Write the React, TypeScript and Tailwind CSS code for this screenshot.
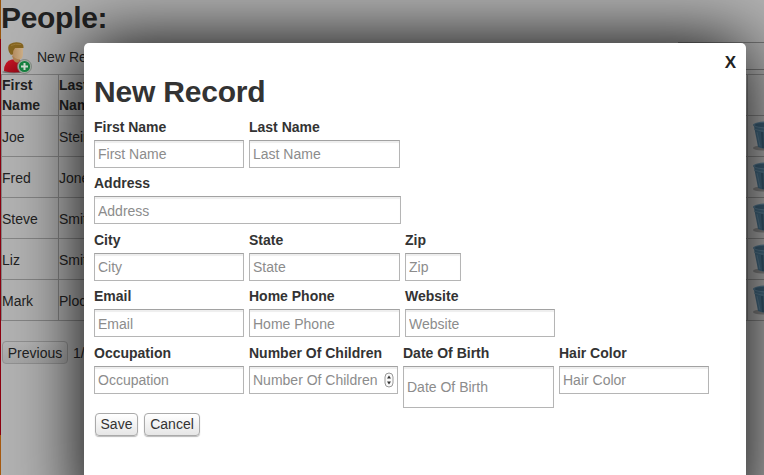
import React from "react";

type FieldProps = { label: string; box: string; low?: boolean; spinner?: boolean };

function Field({ label, box, low, spinner }: FieldProps) {
  return (
    <label className="flex shrink-0 flex-col">
      <span className="h-5 whitespace-nowrap font-bold leading-5">{label}</span>
      <span className={`mt-[3px] flex items-center border border-[#b5b5b5] border-t-[#a2a2a2] bg-white shadow-[inset_0_2px_1px_#eee] ${box}`}>
        <input
          placeholder={label}
          className={`h-full w-full min-w-0 bg-transparent pl-[3px] outline-none placeholder:text-[#8c8c8c] ${low ? "pt-px" : ""}`}
        />
        {spinner && (
          <svg className="mr-[3px] shrink-0" width="10" height="16" viewBox="0 0 10 16">
            <rect x="1" y="1" width="8" height="14" rx="4" fill="#fafafa" stroke="#999" />
            <path d="M5 3.5 7 6.5H3Z M5 12.5 7 9.5H3Z" fill="#333" />
          </svg>
        )}
      </span>
    </label>
  );
}

function Trash() {
  return (
    <svg width="32" height="32" viewBox="0 0 32 32" className="shrink-0">
      <ellipse cx="10" cy="28" rx="9" ry="2.5" fill="#555" opacity=".5" />
      <path d="M2 6 6 27Q15 31 25 27L30 6Z" fill="#456b84" />
      <path d="M10 12l1 16M14.500 13v16M19 12v17" stroke="#36566c" strokeWidth="2" />
      <path d="M5 12l3 14" stroke="#5c7f95" strokeWidth="1" />
      <ellipse cx="16" cy="5" rx="15" ry="3.6" fill="#5b7e95" />
      <ellipse cx="16" cy="5" rx="13" ry="2.3" fill="#3d6078" />
      <path d="M2 9Q16 14 30 9" fill="none" stroke="#5e8095" />
    </svg>
  );
}

function AddUser() {
  return (
    <svg width="32" height="32" viewBox="0 0 32 32" className="shrink-0">
      <defs>
        <linearGradient id="shirt" x2="1" y2="1">
          <stop stopColor="#cc1728" />
          <stop offset="1" stopColor="#8d0713" />
        </linearGradient>
        <linearGradient id="face">
          <stop stopColor="#b1875a" />
          <stop offset="1" stopColor="#d0b28a" />
        </linearGradient>
      </defs>
      <ellipse cx="12" cy="30" rx="11" ry="1.500" fill="#777" />
      <path d="M3 29Q3 19 11 17.500H18Q23 20 24 29Q13 32 3 29Z" fill="url(#shirt)" />
      <path d="M11 14h8v4q-2 5-6 1Z" fill="#b08050" />
      <path d="M10 5H22V11Q22 17 18.500 17.500Q14 17 11 13Z" fill="url(#face)" />
      <path d="M8 10Q6 4 9 2Q13-.5 18 .5Q23 1 22.500 6H14Q12 8 12 12L10 13Z" fill="#866520" />
      <path d="M10 3.500Q14 1.500 20 2.500" fill="none" stroke="#9b7a35" />
      <circle cx="23.500" cy="24.500" r="7" fill="#a9b3a9" stroke="#737b73" strokeWidth=".7" />
      <circle cx="23.500" cy="24.500" r="5.600" fill="#158440" />
      <path d="M23.500 21v7M20 24.500h7" stroke="#d3ded3" strokeWidth="2" />
    </svg>
  );
}

const people = [
  ["Joe", "Stein"],
  ["Fred", "Jone"],
  ["Steve", "Smit"],
  ["Liz", "Smit"],
  ["Mark", "Ploc"],
];

const button =
  "h-[23px] rounded-[4px] border border-[#aaa] bg-linear-to-b from-white to-[#e6e6e6] leading-[21px] shadow-[0_1px_1px_#bbb]";

export default function App() {
  return (
    <div className="relative flex h-[475px] w-[764px] overflow-hidden bg-[#b2b2b2] font-['Liberation_Sans',Arial,sans-serif] text-[14px] leading-5 text-[#222]">
      <div className="flex w-px shrink-0 flex-col bg-[#8c0010]">
        <div className="h-[41px] bg-[#98540c]" />
        <div className="mt-[396px] h-[42px] bg-[#a65a10]" />
      </div>
      <div className="flex min-w-0 flex-1 flex-col">
        <h1 className="h-[42px] text-[30px] font-bold leading-[35px] tracking-[-0.3px]">People:</h1>
        <div className="flex h-8 justify-between">
          <div className="flex items-center">
            <AddUser />
            <span className="ml-1 mt-[-2px] whitespace-nowrap">New Re</span>
          </div>
          <div className="h-7 w-[86px] border border-r-0 border-[#777]" />
        </div>
        <div className="flex flex-col border-l border-t border-[#858585]">
          <div className="flex h-[41px] border-b border-[#858585] font-bold">
            <div className="w-[57px] border-r border-[#858585]">First Name</div>
            <div className="w-8">Last Nam</div>
            <div className="ml-auto w-[17px] border-l border-[#858585]" />
          </div>
          {people.map(([first, last]) => (
            <div key={first} className="flex h-[41px] items-center border-b border-[#858585]">
              <div className="flex h-full w-[57px] items-center border-r border-[#858585] pt-[2px]">{first}</div>
              <div className="w-9 pt-[2px]">{last}</div>
              <div className="ml-auto flex h-full w-[17px] items-center overflow-hidden border-l border-[#858585] pl-1">
                <Trash />
              </div>
            </div>
          ))}
        </div>
        <div className="mt-5 flex items-center">
          <div className="ml-px h-[23px] w-[66px] rounded-[4px] border border-[#919191] bg-linear-to-b from-[#b4b4b4] to-[#a5a5a5] text-center leading-[22px]">
            Previous
          </div>
          <span className="ml-[5px]">1/</span>
        </div>
      </div>

      <div className="absolute left-[84px] top-[43px] flex h-[480px] w-[662px] flex-col rounded-[5px] bg-white pl-[10px] pt-[30px] text-[#333] shadow-[0_0_72px_#000]">
        <div className="absolute right-[10px] top-[10px] text-[17px] font-bold leading-5 text-[#222]">X</div>
        <h2 className="h-11 text-[30px] font-bold leading-[37px] tracking-[-0.2px]">New Record</h2>
        <div className="flex h-14 gap-[5px]">
          <Field label="First Name" box="h-7 w-[150px]" />
          <Field label="Last Name" box="h-7 w-[151px]" />
        </div>
        <div className="flex h-[57px]">
          <Field label="Address" box="h-7 w-[307px]" low />
        </div>
        <div className="flex h-14 gap-[5px]">
          <Field label="City" box="h-7 w-[150px]" />
          <Field label="State" box="h-7 w-[151px]" />
          <Field label="Zip" box="h-7 w-14" />
        </div>
        <div className="flex h-[57px] gap-[5px]">
          <Field label="Email" box="h-7 w-[150px]" low />
          <Field label="Home Phone" box="h-7 w-[151px]" low />
          <Field label="Website" box="h-7 w-[150px]" low />
        </div>
        <div className="flex h-[70px] gap-[5px]">
          <Field label="Occupation" box="h-7 w-[150px]" />
          <Field label="Number Of Children" box="h-7 w-[149px]" spinner />
          <Field label="Date Of Birth" box="h-[42px] w-[151px]" />
          <Field label="Hair Color" box="h-7 w-[150px]" />
        </div>
        <div className="ml-px flex gap-[6px]">
          <button className={`${button} w-[43px]`}>Save</button>
          <button className={`${button} w-14`}>Cancel</button>
        </div>
      </div>
    </div>
  );
}
